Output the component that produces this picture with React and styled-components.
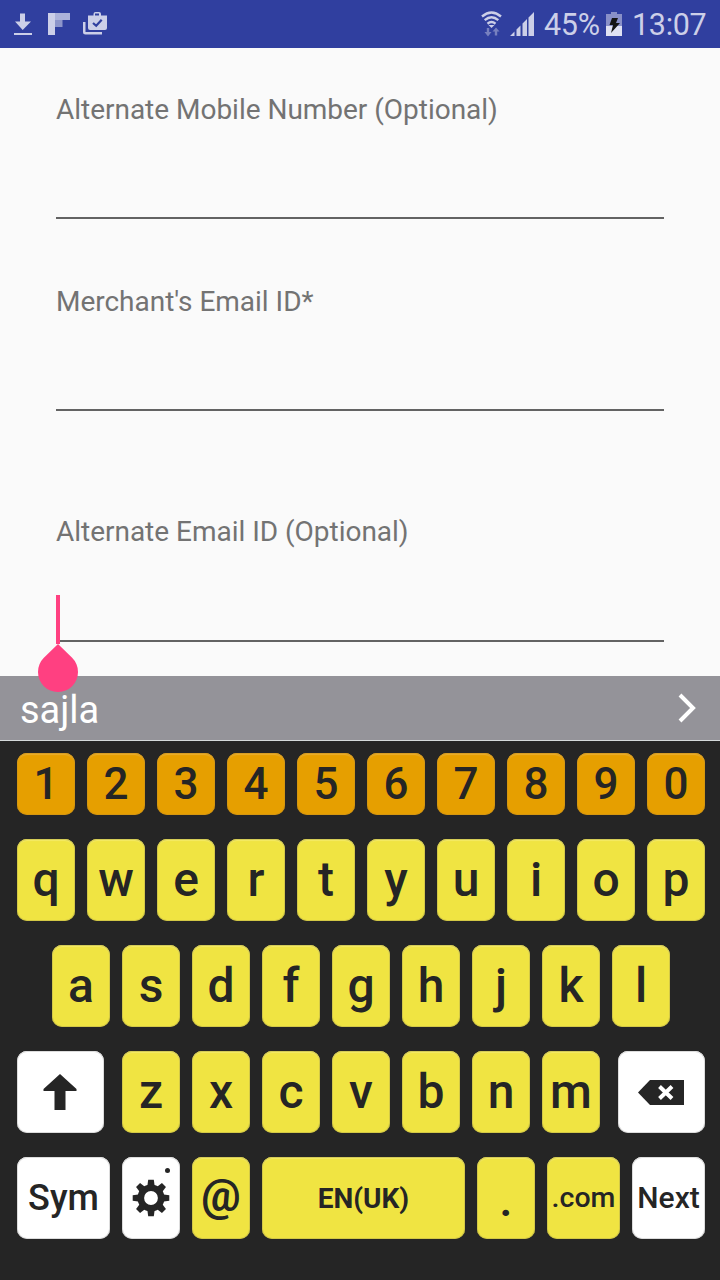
import React from "react";
import styled, { createGlobalStyle } from "styled-components";

const GlobalStyle = createGlobalStyle`
  * { box-sizing: border-box; }
  body { margin: 0; background: #fafafa; font-family: Roboto, "Liberation Sans", sans-serif; }
`;

const Screen = styled.div`
  width: 720px;
  height: 1280px;
  display: flex;
  flex-direction: column;
  overflow: hidden;
  background: #fafafa;
`;

const StatusBar = styled.header`
  height: 48px;
  flex: none;
  display: flex;
  align-items: center;
  justify-content: space-between;
  padding: 0 13px 0 12px;
  background: #303f9f;
  color: #cccfe8;
  font-size: 30.5px;
`;

const StatusGroup = styled.div`
  height: 48px;
  display: flex;
  align-items: center;
`;

const StatusIcon = styled.span`
  display: flex;
  margin-left: ${(p) => p.$gap}px;
`;

const StatusText = styled.span`
  line-height: 48px;
  white-space: nowrap;
  padding-top: 2px;
  margin-left: ${(p) => p.$gap}px;
  width: ${(p) => p.$width}px;
  letter-spacing: -0.3px;
`;

const Form = styled.main`
  height: 628px;
  flex: none;
  padding: 42px 56px 0;
`;

const Field = styled.label`
  position: relative;
  display: flex;
  flex-direction: column;
  justify-content: space-between;
  height: 129px;
  padding-top: ${(p) => p.$drop || 0}px;
  margin-bottom: ${(p) => p.$after}px;
  border-bottom: 2px solid #636363;
`;

const FieldLabel = styled.span`
  font-size: 28px;
  line-height: 38px;
  color: #737373;
  white-space: nowrap;
  letter-spacing: -0.02px;
`;

const Caret = styled.span`
  position: absolute;
  left: 0;
  bottom: -4px;
  width: 4px;
  height: 49px;
  background: #ff4081;
`;

const CaretHandle = styled.svg`
  position: absolute;
  left: -18px;
  top: 131px;
  z-index: 2;
`;

const SuggestionBar = styled.div`
  height: 65px;
  flex: none;
  display: flex;
  align-items: center;
  justify-content: space-between;
  padding: 0 24px 0 20px;
  background: #949399;
  border-bottom: 1px solid #d5dadb;
  color: #fff;
`;

const Suggestion = styled.span`
  font-size: 38px;
  line-height: 60px;
  padding-top: 4px;
`;

const Keyboard = styled.section`
  flex: 1;
  display: flex;
  flex-direction: column;
  gap: 24px;
  padding: 12px 15px 0 17px;
  background: #252525;
`;

const KeyRow = styled.div`
  height: ${(p) => p.$height || 82}px;
  flex: none;
  display: flex;
  justify-content: ${(p) => (p.$centered ? "center" : "space-between")};
  gap: 12px;
`;

const LetterGroup = styled.div`
  display: flex;
  gap: 12px;
`;

const tones = {
  number: { fill: "#e69f00", edge: "#c78f1c", top: "#e9ad2b" },
  letter: { fill: "#f0e442", edge: "#b9b14a", top: "#f3e966" },
  action: { fill: "#ffffff", edge: "#bdbdbd", top: "#ffffff" },
};

const Key = styled.button`
  position: relative;
  width: ${(p) => p.$width || 58}px;
  height: 100%;
  flex: none;
  display: flex;
  align-items: center;
  justify-content: center;
  margin: 0;
  padding: ${(p) => p.$drop || 0}px ${(p) => p.$shift || 0}px ${(p) => p.$lift || 0}px 0;
  border: 0;
  border-radius: 10px;
  background: ${(p) => tones[p.$tone].fill};
  box-shadow: inset 0 0 0 1px ${(p) => tones[p.$tone].edge}88, inset 0 2px 1px ${(p) => tones[p.$tone].top};
  color: #252525;
  font-family: inherit;
  font-size: ${(p) => p.$size || 48}px;
  font-weight: ${(p) => p.$weight || 500};
  line-height: 1;
  white-space: nowrap;
`;

const KeyDot = styled.span`
  position: absolute;
  top: 11px;
  right: 10px;
  width: 5px;
  height: 5px;
  border-radius: 50%;
  background: #252525;
`;

const NotificationIcons = () => (
  <svg width="97" height="24" viewBox="0 0 97 24" fill="#cccfe8">
    <path d="M8 1.500h5v8h6L10.700 18 3 9.500h5zM2 21h18v2H2z" />
    <path d="M36 1h7v22h-7z" />
    <path d="M43 1h15v7H43z" opacity=".8" />
    <path d="M43 8h7.500v7H43z" opacity=".6" />
    <path fillRule="evenodd" d="M71 10h2.500v10H90v2.500H73.500Q71 22.500 71 20zM76 3.500h5.500V2q0-2 2-2h3.500q2 0 2 2v1.500h6v12.500q0 2-2 2H78q-2 0-2-2zM83 1.500v2h4v-2z" />
    <path d="M81 11l3.200 2.800 5.500-6" fill="none" stroke="#303f9f" strokeWidth="2.200" />
  </svg>
);

const WifiIcon = () => (
  <svg width="22" height="26" viewBox="0 0 22 26" fill="none" stroke="#cccfe8" strokeWidth="2.400">
    <path d="M1 5.500Q10.500-2.500 20 5.500M3.700 9.200q6.800-5.800 13.600 0M6.500 12.700q4-3.300 8 0" />
    <path d="M7.500 14h6l-3 3z" fill="#cccfe8" stroke="none" />
    <path d="M5.800 17h2.400v4h2.300L7 25.500 3.500 21h2.300zM13.800 24.500h2.400v-4h2.300L15 16.500 11.500 20.500h2.300z" fill="#7780bf" stroke="none" />
  </svg>
);

const SignalIcon = () => (
  <svg width="24" height="24" viewBox="0 0 24 24" fill="#cccfe8">
    <path d="M0 24L4.500 19.500V24zM6.500 17.500l4-4V24h-4zM12.500 11.500l4.500-4.500v17h-4.500zM18.500 5.500L24 0v24h-5.500z" />
  </svg>
);

const BatteryIcon = () => (
  <svg width="16" height="24" viewBox="0 0 16 24">
    <path d="M0 2h5V0h6v2h5v12H0z" fill="#8990c8" />
    <path d="M0 14h16v10H0z" fill="#dfe1f2" />
    <path d="M6 6h6l-2 5h4L5 21l2-8H3.500z" fill="#151515" />
  </svg>
);

const ShiftIcon = () => (
  <svg width="34" height="36" viewBox="0 0 34 36" fill="#252525">
    <path d="M17 0l16.500 15v2H22.500v19h-11V17H.500v-2z" />
  </svg>
);

const BackspaceIcon = () => (
  <svg width="46" height="25" viewBox="0 0 46 25">
    <path d="M0 12.500L12 0h34v25H12z" fill="#252525" />
    <path d="M21.500 6.500l12.500 12m0-12l-12.500 12" stroke="#fff" strokeWidth="4" />
  </svg>
);

const GearIcon = () => (
  <svg width="38" height="38" viewBox="-19 -19 38 38" fill="none" stroke="#252525">
    <circle r="10.200" strokeWidth="6.600" />
    {[0, 45, 90, 135, 180, 225, 270, 315].map((angle) => (
      <path key={angle} transform={`rotate(${angle})`} d="M-3.800-11L-2.800-18.300H2.800L3.800-11z" fill="#252525" stroke="none" />
    ))}
  </svg>
);

const Letters = ({ keys }) =>
  keys.split("").map((letter) => (
    <Key key={letter} $tone="letter">{letter}</Key>
  ));

export default function App() {
  return (
    <Screen>
      <GlobalStyle />
      <StatusBar>
        <NotificationIcons />
        <StatusGroup>
          <WifiIcon />
          <StatusIcon $gap={7}><SignalIcon /></StatusIcon>
          <StatusText $gap={10} $width={57}>45%</StatusText>
          <StatusIcon $gap={5}><BatteryIcon /></StatusIcon>
          <StatusText $gap={10} $width={75}>13:07</StatusText>
        </StatusGroup>
      </StatusBar>
      <Form>
        <Field $after={63} $drop={1}>
          <FieldLabel>Alternate Mobile Number (Optional)</FieldLabel>
        </Field>
        <Field $after={102} $drop={1}>
          <FieldLabel>Merchant's Email ID*</FieldLabel>
        </Field>
        <Field $after={0}>
          <FieldLabel>Alternate Email ID (Optional)</FieldLabel>
          <Caret />
          <CaretHandle width="40" height="48" viewBox="0 0 40 48">
            <path d="M20 0L34.140 13.860A20 20 0 1 1 5.860 13.860Z" fill="#ff4081" />
          </CaretHandle>
        </Field>
      </Form>
      <SuggestionBar>
        <Suggestion>sajla</Suggestion>
        <svg width="18" height="30" viewBox="0 0 18 30" fill="none" stroke="#fff" strokeWidth="4">
          <path d="M2 2l13 13L2 28" />
        </svg>
      </SuggestionBar>
      <Keyboard>
        <KeyRow $height={62}>
          {"1234567890".split("").map((digit) => (
            <Key key={digit} $tone="number" $size={44}>{digit}</Key>
          ))}
        </KeyRow>
        <KeyRow><Letters keys="qwertyuiop" /></KeyRow>
        <KeyRow $centered><Letters keys="asdfghjkl" /></KeyRow>
        <KeyRow>
          <Key $tone="action" $width={87} $shift={1}><ShiftIcon /></Key>
          <LetterGroup><Letters keys="zxcvbnm" /></LetterGroup>
          <Key $tone="action" $width={87} $shift={2}><BackspaceIcon /></Key>
        </KeyRow>
        <KeyRow>
          <Key $tone="action" $width={93} $size={36}>Sym</Key>
          <Key $tone="action"><GearIcon /><KeyDot /></Key>
          <Key $tone="letter" $size={44} $weight={700} $lift={5}>@</Key>
          <Key $tone="letter" $width={203} $size={28} $weight={700} $drop={2}>EN(UK)</Key>
          <Key $tone="letter" $drop={4}>.</Key>
          <Key $tone="letter" $width={73} $size={28.5} $drop={1}>.com</Key>
          <Key $tone="action" $width={73} $size={30}>Next</Key>
        </KeyRow>
      </Keyboard>
    </Screen>
  );
}
